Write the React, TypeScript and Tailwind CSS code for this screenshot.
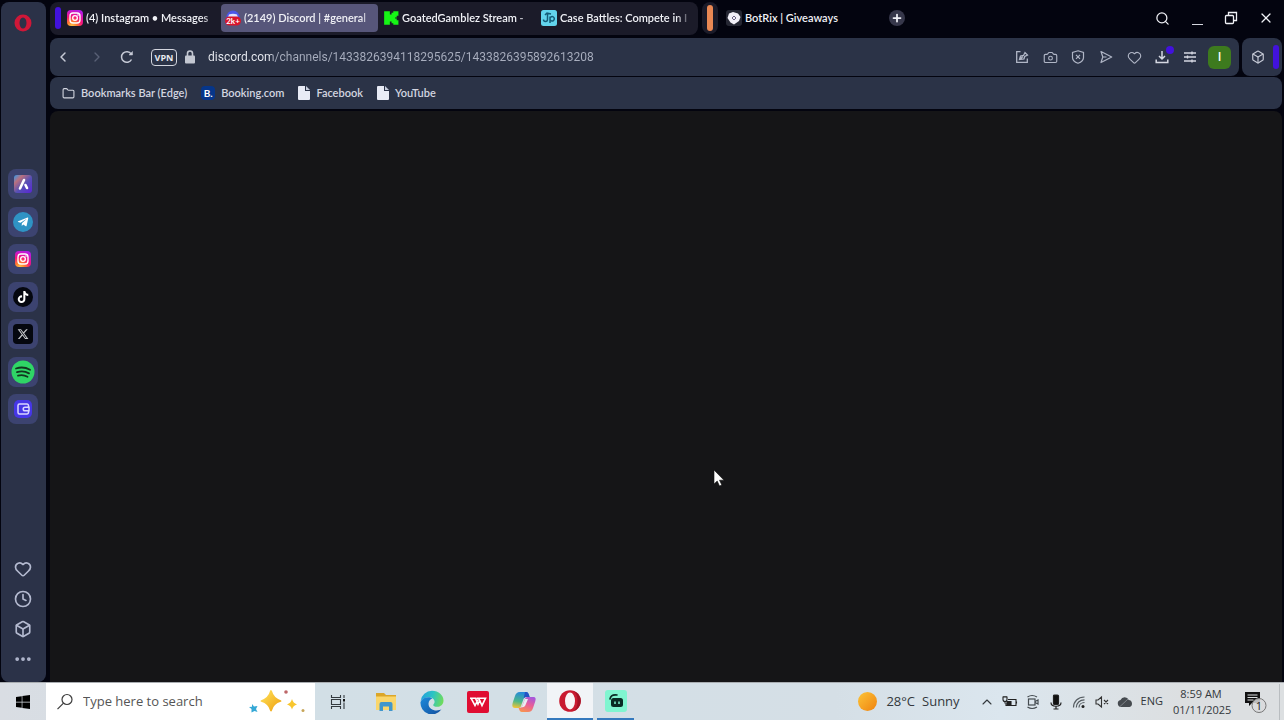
import type { ReactNode } from 'react';
import {
  Box,
  Camera,
  ChevronLeft,
  ChevronRight,
  ChevronUp,
  Clock,
  Ellipsis,
  Folder,
  Heart,
  Plus,
  Search,
  X,
} from 'lucide-react';
import { FaTelegramPlane, FaTiktok, FaWindows } from 'react-icons/fa';
import { FaXTwitter } from 'react-icons/fa6';

const InstagramIcon = ({ id, className }: { id: string; className?: string }) => (
  <svg viewBox="0 0 24 24" className={className}>
    <defs>
      <radialGradient id={id} cx="0.3" cy="1.05" r="1.1">
        <stop offset="0" stopColor="#ffd24a" />
        <stop offset="0.3" stopColor="#ff7a2f" />
        <stop offset="0.6" stopColor="#f5137c" />
        <stop offset="1" stopColor="#b51be8" />
      </radialGradient>
    </defs>
    <rect width="24" height="24" rx="6" fill={`url(#${id})`} />
    <rect x="4.5" y="4.5" width="15" height="15" rx="4.5" fill="none" stroke="#fff" strokeWidth="2" />
    <circle cx="12" cy="12" r="3.5" fill="none" stroke="#fff" strokeWidth="2" />
    <circle cx="16.5" cy="7.5" r="1.2" fill="#fff" />
  </svg>
);

const DiscordIcon = () => (
  <svg viewBox="0 0 16 16" className="h-4 w-4 shrink-0 overflow-visible">
    <circle cx="8" cy="7" r="6.5" fill="#4b56e8" />
    <path d="M4 4.5c2.5-1 5.5-1 8 0l1 3H3z" fill="#dfe2ff" />
    <rect x="0" y="6.5" width="16" height="9" rx="4.5" fill="#d8152c" />
    <text x="8" y="14" textAnchor="middle" fontSize="8" fontWeight="700" fill="#fff">2k+</text>
  </svg>
);

const KickIcon = () => (
  <svg viewBox="0 0 14 14" className="h-4 w-4 shrink-0">
    <path d="M1 1h5v3h1.500V2.500H9V1h4.500v4H12v1.500h-1.500v1H12V9h1.500v4H9v-1.500H7.500V10H6v3H1z" fill="#16f516" />
  </svg>
);

const CaseIcon = () => (
  <svg viewBox="0 0 16 16" className="h-4 w-4 shrink-0">
    <rect width="16" height="16" rx="2.500" fill="#62d4ec" />
    <path d="M6.500 3.500v6a2 2 0 0 1-4 0M9 13V6.500M9 8.200a2.200 2.200 0 1 1 0 1.200M4 5l2-2 4 1" fill="none" stroke="#135d78" strokeWidth="1.500" />
  </svg>
);

const BotrixIcon = () => (
  <svg viewBox="0 0 16 16" className="h-4 w-4 shrink-0">
    <rect width="16" height="16" rx="3" fill="#252733" />
    <path d="M3 3.500 7 2l5 1.500L14.500 7 13 11l-5 3.500-3.500-2L1.500 8z" fill="#f2f0f8" />
    <path d="m6 8 2-2 2 2-2 2z" fill="none" stroke="#6b6484" strokeWidth="1" />
  </svg>
);

const FileIcon = () => (
  <svg viewBox="0 0 12 14" className="h-[14px] w-3 shrink-0">
    <path d="M1 0h6v5h5v8a1 1 0 0 1-1 1H1a1 1 0 0 1-1-1V1a1 1 0 0 1 1-1z" fill="#e8ebf5" />
    <path d="M8 0v4h4z" fill="#c8cede" />
  </svg>
);

const LockIcon = () => (
  <svg viewBox="0 0 12 14" className="h-[14px] w-3 shrink-0">
    <rect x="1" y="5.500" width="10" height="8" rx="1" fill="#c3c7d1" />
    <path d="M3.500 6V3.500a2.500 2.500 0 0 1 5 0V6" fill="none" stroke="#c3c7d1" strokeWidth="1.600" />
  </svg>
);

const ReloadIcon = () => (
  <svg viewBox="0 0 14 14" className="h-[14px] w-[14px]" fill="none" stroke="currentColor" strokeWidth="1.500">
    <path d="M11.500 9.500A5.300 5.300 0 1 1 11.200 4" />
    <path d="M12.500 1.500v3.500H9z" fill="currentColor" strokeWidth="0.500" />
  </svg>
);

const EditIcon = () => (
  <svg viewBox="0 0 14 14" className="h-[14px] w-[14px]" fill="none" stroke="currentColor" strokeWidth="1.300">
    <path d="M5.500 1.700H1.700v10.600h10.600V8.500" />
    <path d="M4.500 9.500 5.500 6l3-.5 1.500-3 2.500 2.500-2.800 1.500-.7 2.500zM4.500 9.500 8 6.500" />
  </svg>
);

const ShieldIcon = () => (
  <svg viewBox="0 0 14 14" className="h-[14px] w-[14px]" fill="none" stroke="currentColor" strokeWidth="1.200">
    <path d="M7 .8 12.500 2.500v5c0 2.500-2 4.500-5.500 5.800C3.500 12 1.500 10 1.500 7.500v-5z" />
    <path d="m5 4.800 4 4m0-4-4 4" />
  </svg>
);

const SendIcon = () => (
  <svg viewBox="0 0 14 14" className="h-[14px] w-[14px]" fill="none" stroke="currentColor" strokeWidth="1.200" strokeLinejoin="round">
    <path d="M2 1.500 12.700 7 2 12.500 3.800 7zM3.800 7H7.500" />
  </svg>
);

const DownloadIcon = () => (
  <svg viewBox="0 0 14 14" className="h-[14px] w-[14px]" fill="none" stroke="currentColor" strokeWidth="1.500">
    <path d="M7 1v8M4 6l3 3 3-3M1.200 9.500v3h11.600v-3" />
  </svg>
);

const SetupIcon = () => (
  <svg viewBox="0 0 14 14" className="h-[14px] w-[14px]" fill="none" stroke="currentColor" strokeWidth="1.400">
    <path d="M1 3h12M1 7h12M1 11h12M9 1.500v3M4.500 5.500v3M9 9.500v3" />
  </svg>
);

const RestoreIcon = () => (
  <svg viewBox="0 0 14 14" className="h-[14px] w-[14px]" fill="none" stroke="currentColor" strokeWidth="1.300">
    <rect x="1.500" y="4.500" width="8" height="8" rx="1" />
    <path d="M4.500 4.500v-3h8v8h-3" />
  </svg>
);

const AriaIcon = () => (
  <svg viewBox="0 0 20 20" className="h-5 w-5">
    <defs>
      <linearGradient id="aria" x1="0" y1="0" x2="1" y2="1">
        <stop offset="0" stopColor="#2f9df0" />
        <stop offset="0.25" stopColor="#b9707e" />
        <stop offset="0.55" stopColor="#5750b5" />
        <stop offset="1" stopColor="#5a24d6" />
      </linearGradient>
    </defs>
    <rect x="1" y="1" width="18" height="18" rx="3" fill="url(#aria)" />
    <path d="M11 6 7 14.500M12.500 11l1.500 3" stroke="#fff" strokeWidth="2.600" strokeLinecap="round" />
  </svg>
);

const SpotifyIcon = () => (
  <svg viewBox="0 0 24 24" className="h-6 w-6">
    <circle cx="12" cy="12" r="11.500" fill="#2fd566" />
    <path d="M5 8.500c4.500-1.500 10-1 14 1.200M6 12.200c4-1.200 8.500-.8 12 1.200M7 15.700c3.500-1 6.500-.6 9.500 1.100" fill="none" stroke="#12351f" strokeWidth="1.800" strokeLinecap="round" />
  </svg>
);

const WalletIcon = () => (
  <svg viewBox="0 0 20 20" className="h-5 w-5">
    <rect x="1" y="1" width="18" height="18" rx="5" fill="#4636e6" />
    <path d="M15.500 8V6.500a1.500 1.500 0 0 0-1.500-1.500H6.500A1.500 1.500 0 0 0 5 6.500v7A1.500 1.500 0 0 0 6.500 15H14a1.500 1.500 0 0 0 1.500-1.500V12M16 8.200h-4a1.800 1.800 0 0 0 0 3.600h4z" fill="none" stroke="#d9d6ff" strokeWidth="1.500" />
  </svg>
);

const SearchGlass = () => (
  <svg viewBox="0 0 18 18" className="h-[18px] w-[18px] shrink-0" fill="none" stroke="#3d3d3d" strokeWidth="1.200">
    <circle cx="11" cy="6.500" r="5" />
    <path d="m7.500 10.200-6 6" />
  </svg>
);

const SparklesIcon = () => (
  <svg viewBox="0 0 58 26" className="h-[26px] w-[58px] shrink-0">
    <defs>
      <linearGradient id="spark" x1="0" y1="0" x2="1" y2="1">
        <stop offset="0" stopColor="#ffe25a" />
        <stop offset="1" stopColor="#eea010" />
      </linearGradient>
    </defs>
    <path d="M22 2q2 7.500 9.500 10-7.500 2-9.500 9.500-2-7.500-9.500-9.500 7.500-2.500 9.500-10z" fill="url(#spark)" stroke="url(#spark)" strokeWidth="1.800" strokeLinejoin="round" />
    <path d="M43 10q1 4 5 5.500-4 1-5 5-1-4-5-5 4-1.500 5-5.500z" fill="#f8c62e" />
    <path d="m3 15 2 2.500 3.500-.5-1.500 3 1.500 3-3-1-3 1.500V20L0 18l3-.300z" fill="#35a8d6" />
    <circle cx="37" cy="3" r="1.800" fill="#bd6668" />
    <circle cx="54" cy="21.500" r="1.500" fill="#c7a659" />
  </svg>
);

const TaskViewIcon = () => (
  <svg viewBox="0 0 16 16" className="h-4 w-4" fill="none" stroke="#333a3f" strokeWidth="1.100">
    <path d="M1.500 1v2.500h9V1M1.500 15v-2.500h9V15M1.500 5.500h9v5h-9zM14 1v3M14 8.500V15" />
    <rect x="13" y="5" width="2" height="2.500" fill="#111" stroke="none" />
  </svg>
);

const ExplorerIcon = () => (
  <svg viewBox="0 0 22 20" className="h-5 w-[22px]">
    <path d="M1 1h8l2 2h10v15H1z" fill="#dba629" />
    <path d="M1 4.500h20V18H1z" fill="#fad66b" />
    <path d="M4.500 19v-7a2 2 0 0 1 2-2h9a2 2 0 0 1 2 2v7h-3.500v-4.500H8V19z" fill="#4197cc" />
  </svg>
);

const EdgeIcon = () => (
  <svg viewBox="0 0 24 24" className="h-6 w-6">
    <defs>
      <linearGradient id="edge-top" x1="0" y1="0.3" x2="1" y2="0.5">
        <stop offset="0" stopColor="#239fdd" />
        <stop offset="0.5" stopColor="#2cc3c4" />
        <stop offset="1" stopColor="#6fdc5c" />
      </linearGradient>
      <linearGradient id="edge-low" x1="0" y1="0" x2="1" y2="1">
        <stop offset="0" stopColor="#1c8bdc" />
        <stop offset="1" stopColor="#134f9e" />
      </linearGradient>
    </defs>
    <path d="M.6 11A11.500 11.500 0 0 1 12 .8c6.800 0 11.500 4.600 11.500 9.700 0 4-3 6.300-6.300 6.300-2.500 0-4-.9-4-1.800s1.400-1.300 1.400-3.300c0-2.500-2.500-4.500-5.600-4.500C5 7.200 2 9 .6 11z" fill="url(#edge-top)" />
    <path d="M.5 12C1.500 9 4.500 7.200 8.500 7.200c1.600 0 3 .5 4 1.200-2 .3-4 2.400-4 5.300 0 4.300 4 6.800 8 6.800 2 0 4-.6 5-1.200A11.500 11.500 0 0 1 .5 12z" fill="url(#edge-low)" />
  </svg>
);

const WpsIcon = () => (
  <svg viewBox="0 0 22 22" className="h-[22px] w-[22px]">
    <rect width="22" height="22" rx="2" fill="#e00d32" />
    <path d="M3 7.200h5.500l2.500 6 2-4.500M9.500 7.200h9L15 14.500l-3.200-7M4 7.200l4 7.300 3-6" fill="none" stroke="#fff" strokeWidth="1.600" />
  </svg>
);

const CopilotIcon = () => (
  <svg viewBox="0 0 24 22" className="h-[22px] w-6">
    <defs>
      <linearGradient id="cop-a" x1="0.5" y1="0" x2="0.3" y2="1">
        <stop offset="0" stopColor="#2387dd" />
        <stop offset="0.6" stopColor="#4db888" />
        <stop offset="1" stopColor="#f0c336" />
      </linearGradient>
      <linearGradient id="cop-b" x1="0.7" y1="0" x2="0.3" y2="1">
        <stop offset="0" stopColor="#a757db" />
        <stop offset="0.5" stopColor="#ea5f95" />
        <stop offset="1" stopColor="#f79352" />
      </linearGradient>
    </defs>
    <path d="M8 1h6c2 0 2.500 1.500 3 3l.6 2h-3c-2 0-2.800 1-3.300 2.500L9 15c-.5 1.500-1.500 2-3 2H3C0 17 0 14 .8 11.500l2-6C3.800 2.500 5 1 8 1z" fill="url(#cop-a)" />
    <path d="M16 21h-6c-2 0-2.500-1.500-3-3l-.4-1.200C9 17 10 16 10.500 14.500L13 8c.5-1.500 1.500-2 3-2h5c3 0 3 2 2.200 4.500l-2 6C20.200 19.500 19 21 16 21z" fill="url(#cop-b)" />
    <path d="M13 1h1c2 0 2.500 1.500 3 3l.6 2h-3c-1.500 0-2.400.6-3 1.700z" fill="#2552c4" />
    <path d="M13 8 10.500 14.500c-.4 1-.8 1.600-1.500 2l2.500-.5c1-.3 1.500-1 2-2L16 8z" fill="#e9edf2" />
  </svg>
);

const OperaIcon = () => (
  <svg viewBox="0 0 24 24" className="h-6 w-6">
    <circle cx="12" cy="12" r="10.800" fill="#c91a30" />
    <path d="M15 1.700a10.700 10.700 0 0 1 0 20.600c3-1.500 4.500-5 4.500-10.300S18 3.200 15 1.700z" fill="#a31225" />
    <ellipse cx="12" cy="12" rx="5" ry="8.500" fill="#f8f4f6" />
  </svg>
);

const StreamIcon = () => (
  <svg viewBox="0 0 22 22" className="h-[22px] w-[22px]">
    <rect width="22" height="22" rx="3" fill="#80f5d0" />
    <path d="M5 9c.5-3 3-4.500 7-4" fill="none" stroke="#0a2b24" strokeWidth="1.600" strokeLinecap="round" />
    <rect x="6" y="8" width="12" height="9" rx="2.500" fill="#0a2b24" />
    <path d="M10 11.500v2.500M14 11.500v2.500" stroke="#80f5d0" strokeWidth="1.500" />
  </svg>
);

const BatteryIcon = () => (
  <svg viewBox="0 0 16 14" className="h-[14px] w-4" fill="none" stroke="#222" strokeWidth="1.100">
    <path d="M6 4.500h8v6H4V8M14.500 6.500v2" />
    <path d="M5 9.500V6.500h4v3z" fill="#222" />
    <path d="M1 2v2.500a2 2 0 0 0 4 0V2zM3 6.500v2M2 1v1M4 1v1" />
  </svg>
);

const MeetIcon = () => (
  <svg viewBox="0 0 14 16" className="h-4 w-[14px]" fill="none" stroke="#444b50" strokeWidth="1.200">
    <rect x="2.500" y="5" width="6.500" height="6" />
    <path d="M9 7.500 12 6v4L9 8.500M1.500 3Q6 0 11 3M1.500 13q4.500 3 9.500 0" />
  </svg>
);

const MicIcon = () => (
  <svg viewBox="0 0 12 16" className="h-4 w-3" fill="none" stroke="#222" strokeWidth="1.200">
    <rect x="3.500" y="1" width="5" height="9.500" rx="1" fill="#111" />
    <path d="M1 8.500c0 5 10 5 10 0M6 12v3M3.500 15h5" />
  </svg>
);

const WifiIcon = () => (
  <svg viewBox="0 0 14 14" className="h-[14px] w-[14px]" fill="none" stroke="#555c61" strokeWidth="1.200">
    <path d="M1.500 12.500c0-6 4.500-10.500 11-10.500M4.300 12.500c0-4.500 3.500-7.700 8.200-7.700M7 12.500c0-3 2.500-5 5.500-5" />
    <circle cx="11" cy="11.500" r="1.500" fill="#222" stroke="none" />
  </svg>
);

const MuteIcon = () => (
  <svg viewBox="0 0 14 14" className="h-[14px] w-[14px]" fill="none" stroke="#333" strokeWidth="1.100">
    <path d="M1 5h2l3.500-3v10L3 9H1zM9 5l4 4M13 5 9 9" />
  </svg>
);

const CloudIcon = () => (
  <svg viewBox="0 0 16 12" className="h-3 w-4">
    <path d="M4 11a3.500 3.500 0 0 1-.5-6.900A4.500 4.500 0 0 1 11.800 4 3.600 3.600 0 0 1 12.500 11z" fill="#464b50" />
    <path d="M3 10.500 11 3" stroke="#7d8388" />
  </svg>
);

const NotificationIcon = () => (
  <svg viewBox="0 0 24 24" className="h-6 w-6">
    <path d="M2 2h15v11H9l-3 3v-3H2z" fill="#111" />
    <path d="M4.500 5h10M4.500 7.500h10M4.500 10h6" stroke="#dcdfe0" />
    <circle cx="16" cy="15.500" r="7" fill="#d9dbdc" fillOpacity="0.850" stroke="#777" />
    <text x="16" y="19.500" textAnchor="middle" fontSize="11" fill="#222">1</text>
  </svg>
);

type Tab = { title: string; icon: ReactNode; active?: boolean };

const tabs: Tab[] = [
  { title: '(4) Instagram • Messages', icon: <InstagramIcon id="ig-tab" className="h-4 w-4 shrink-0" /> },
  { title: '(2149) Discord | #general', icon: <DiscordIcon />, active: true },
  { title: 'GoatedGamblez Stream -', icon: <KickIcon /> },
  { title: 'Case Battles: Compete in I', icon: <CaseIcon /> },
];

const sidebarApps = [
  { label: 'Aria', icon: <AriaIcon /> },
  {
    label: 'Telegram',
    icon: (
      <span className="flex h-5 w-5 items-center justify-center rounded-full bg-[#2f93c4]">
        <FaTelegramPlane className="mr-px h-3 w-3 text-white" />
      </span>
    ),
  },
  { label: 'Instagram', icon: <InstagramIcon id="ig-side" className="h-4 w-4" /> },
  {
    label: 'TikTok',
    icon: (
      <span className="flex h-5 w-5 items-center justify-center rounded-full bg-[#05070f]">
        <FaTiktok className="h-3 w-3 text-white" />
      </span>
    ),
  },
  {
    label: 'X',
    icon: (
      <span className="flex h-5 w-5 items-center justify-center rounded bg-[#05070f]">
        <FaXTwitter className="h-3 w-3 text-[#c5c7cb]" />
      </span>
    ),
  },
  { label: 'Spotify', icon: <SpotifyIcon /> },
  { label: 'Wallet', icon: <WalletIcon /> },
];

const sidebarTools = [
  { label: 'Bookmarks', icon: <Heart size={18} strokeWidth={2.2} /> },
  { label: 'History', icon: <Clock size={18} strokeWidth={2.2} /> },
  { label: 'Extensions', icon: <Box size={18} strokeWidth={2.2} /> },
  { label: 'More', icon: <Ellipsis size={20} strokeWidth={2.5} /> },
];

const addressActions = [
  { label: 'Edit page', icon: <EditIcon /> },
  { label: 'Snapshot', icon: <Camera size={15} strokeWidth={1.8} /> },
  { label: 'Ad blocker', icon: <ShieldIcon /> },
  { label: 'Send to Flow', icon: <SendIcon /> },
  { label: 'Add to bookmarks', icon: <Heart size={15} strokeWidth={1.8} /> },
];

const bookmarks = [
  { label: 'Bookmarks Bar (Edge)', icon: <Folder size={13} strokeWidth={2} className="shrink-0" /> },
  {
    label: 'Booking.com',
    icon: (
      <span className="flex h-[14px] w-[14px] shrink-0 items-center justify-center rounded-sm bg-[#06368a] text-[10px] leading-none font-bold text-white">
        B.
      </span>
    ),
  },
  { label: 'Facebook', icon: <FileIcon /> },
  { label: 'YouTube', icon: <FileIcon /> },
];

const taskbarApps = [
  { label: 'File Explorer', icon: <ExplorerIcon /> },
  { label: 'Microsoft Edge', icon: <EdgeIcon /> },
  { label: 'WPS Office', icon: <WpsIcon /> },
  { label: 'Copilot', icon: <CopilotIcon /> },
];

const trayIcons = [
  { label: 'Battery', icon: <BatteryIcon /> },
  { label: 'Meet Now', icon: <MeetIcon /> },
  { label: 'Microphone', icon: <MicIcon /> },
  { label: 'Network', icon: <WifiIcon /> },
  { label: 'Volume', icon: <MuteIcon /> },
  { label: 'OneDrive', icon: <CloudIcon /> },
];

const Sidebar = () => (
  <nav className="mt-[2px] ml-px flex w-[45px] shrink-0 flex-col items-center rounded-lg bg-[#2b3248] pr-px">
    <button aria-label="Opera menu" className="mt-3 flex h-[18px] w-[18px] items-center justify-center">
      <svg viewBox="0 0 18 18" className="h-[18px] w-[18px]">
        <circle cx="9" cy="9" r="8.500" fill="#cf1738" />
        <ellipse cx="9" cy="9" rx="3.500" ry="5.500" fill="#2b3248" />
      </svg>
    </button>
    <div className="mt-[137px] flex h-[255px] flex-col justify-between">
      {sidebarApps.map(app => (
        <button
          key={app.label}
          aria-label={app.label}
          className="flex h-[30px] w-[30px] items-center justify-center rounded-lg bg-[#3c4370]"
        >
          {app.icon}
        </button>
      ))}
    </div>
    <div className="mt-auto mb-2 flex flex-col text-[#b4bad0]">
      {sidebarTools.map(tool => (
        <button key={tool.label} aria-label={tool.label} className="flex h-[30px] w-[30px] items-center justify-center">
          {tool.icon}
        </button>
      ))}
    </div>
  </nav>
);

const TabBar = () => (
  <div className="flex h-9 shrink-0 items-center font-['Lato','Open_Sans',sans-serif] text-[11px] font-semibold text-[#f0f1f6]">
    <div className="flex h-[33px] items-center gap-px rounded-lg bg-[#1b1b29] pr-1 pl-[5px]">
      <span className="mr-px h-[22px] w-[6px] rounded-sm bg-[#4212dc]" />
      {tabs.map(tab => (
        <button
          key={tab.title}
          className={`flex h-7 w-[157px] items-center gap-[3px] rounded-sm pr-[2px] pl-1 ${
            tab.active ? 'bg-[#57567a]' : ''
          }`}
        >
          {tab.icon}
          <span className="flex-1 text-left whitespace-nowrap [mask-image:linear-gradient(90deg,#000_88%,transparent)]">
            {tab.title}
          </span>
        </button>
      ))}
    </div>
    <span className="ml-1 flex h-8 w-4 items-center justify-center rounded-lg bg-[#1b1b29]">
      <span className="h-[26px] w-[6px] rounded-sm bg-[#ea8853]" />
    </span>
    <button className="flex h-7 w-[157px] items-center gap-[3px] pl-2">
      <BotrixIcon />
      BotRix | Giveaways
    </button>
    <button aria-label="New tab" className="ml-[14px] flex h-4 w-4 items-center justify-center rounded-full bg-[#36374a]">
      <Plus size={12} strokeWidth={3.5} />
    </button>
    <div className="ml-auto flex items-center gap-5 pr-[10px]">
      <button aria-label="Search tabs">
        <Search size={15} />
      </button>
      <button aria-label="Minimize" className="flex h-[14px] w-[14px] items-end justify-center">
        <span className="h-px w-[11px] bg-[#d5d7df]" />
      </button>
      <button aria-label="Restore">
        <RestoreIcon />
      </button>
      <button aria-label="Close">
        <X size={16} strokeWidth={1.8} />
      </button>
    </div>
  </div>
);

const AddressBar = () => (
  <div className="mt-[2px] flex h-[38px] shrink-0 gap-[3px] pr-[2px] text-[#c6cad6]">
    <div className="flex min-w-0 flex-1 items-center rounded-lg bg-[#2b3347] pr-2 pl-1">
      <button aria-label="Back" className="flex w-[18px] justify-center">
        <ChevronLeft size={16} strokeWidth={2.2} />
      </button>
      <button aria-label="Forward" disabled className="ml-4 flex w-[18px] justify-center text-[#596076]">
        <ChevronRight size={16} />
      </button>
      <button aria-label="Reload" className="ml-3 flex w-[18px] justify-center">
        <ReloadIcon />
      </button>
      <button className="ml-[15px] flex h-[17px] w-[26px] items-center justify-center rounded border border-[#d3d6df] text-[9px] leading-none font-bold text-[#e7e9ef]">
        VPN
      </button>
      <span className="ml-[7px] flex">
        <LockIcon />
      </span>
      <input
        aria-label="Address"
        defaultValue="discord.com/channels/1433826394118295625/1433826395892613208"
        className="ml-3 h-6 min-w-0 flex-1 bg-[linear-gradient(90deg,#eceef4_64px,#a9afbf_64px)] bg-clip-text font-['Roboto','Open_Sans',sans-serif] text-xs text-transparent caret-white outline-none"
      />
      <div className="flex items-center text-[#b0b6c6]">
        {addressActions.map(action => (
          <button key={action.label} aria-label={action.label} className="flex w-7 justify-center">
            {action.icon}
          </button>
        ))}
        <button aria-label="Downloads" className="relative flex w-7 justify-center text-[#d5d8e2]">
          <DownloadIcon />
          <span className="absolute -top-1 right-[2px] h-2 w-2 rounded-full bg-[#4212dc]" />
        </button>
        <button aria-label="Easy setup" className="flex w-7 justify-center text-[#d5d8e2]">
          <SetupIcon />
        </button>
      </div>
      <button className="ml-1 flex h-[23px] w-[23px] items-center justify-center rounded-md bg-[#3d7a1e] text-xs font-semibold text-white">
        I
      </button>
    </div>
    <div className="flex w-10 items-center justify-end gap-2 rounded-lg bg-[#2b3347] pr-[3px]">
      <button aria-label="Extensions">
        <Box size={14} strokeWidth={2} />
      </button>
      <span className="h-6 w-[6px] rounded-sm bg-[#4212dc]" />
    </div>
  </div>
);

const BookmarksBar = () => (
  <div className="mt-px mr-[2px] flex h-8 shrink-0 items-center gap-[14px] rounded-lg bg-[#2b3347] pl-3 font-['Lato','Open_Sans',sans-serif] text-[11px] font-semibold text-[#d3d6e0]">
    {bookmarks.map(bookmark => (
      <a key={bookmark.label} href="#" className="flex items-center gap-[6px] whitespace-nowrap">
        {bookmark.icon}
        {bookmark.label}
      </a>
    ))}
  </div>
);

const Taskbar = () => (
  <footer className="flex h-[38px] shrink-0 items-stretch border-t border-[#a9adb1] bg-[linear-gradient(90deg,#d9dde3_0%,#d2dfe6_25%,#d5dfe6_65%,#dbe6ee_78%,#dcdfe1_92%)] text-[#33383c]">
    <button aria-label="Start" className="flex w-[46px] shrink-0 items-center justify-center">
      <FaWindows className="h-4 w-4 text-black" />
    </button>
    <label className="flex w-[269px] shrink-0 items-center bg-white pr-2 pl-[10px]">
      <SearchGlass />
      <input
        type="text"
        aria-label="Search"
        placeholder="Type here to search"
        className="ml-[9px] min-w-0 flex-1 text-[13px] outline-none placeholder:text-[#555]"
      />
      <SparklesIcon />
    </label>
    <button aria-label="Task view" className="mr-[2px] flex w-[46px] shrink-0 items-center justify-center">
      <TaskViewIcon />
    </button>
    {taskbarApps.map(app => (
      <button key={app.label} aria-label={app.label} className="flex w-[46px] shrink-0 items-center justify-center">
        {app.icon}
      </button>
    ))}
    <button aria-label="Opera" className="flex w-[46px] shrink-0 items-center justify-center border-b-2 border-[#3579bd] bg-[#f1f4f7]">
      <OperaIcon />
    </button>
    <button aria-label="Streamer" className="ml-1 flex w-[37px] shrink-0 items-center justify-center border-b-2 border-[#3579bd]">
      <StreamIcon />
    </button>
    <div className="ml-auto flex items-center">
      <button className="flex items-center text-[13px]">
        <span className="mr-[9px] h-[19px] w-[19px] rounded-full bg-linear-to-br from-[#fcc436] to-[#ee820c]" />
        28°C
        <span className="ml-[7px]">Sunny</span>
      </button>
      <button aria-label="Show hidden icons" className="ml-4 flex w-[23px] justify-center">
        <ChevronUp size={16} strokeWidth={1.6} />
      </button>
      {trayIcons.map(item => (
        <button key={item.label} aria-label={item.label} className="flex w-[23px] justify-center">
          {item.icon}
        </button>
      ))}
      <button className="ml-1 text-[11px]">ENG</button>
      <button className="ml-[10px] w-[56px] text-center text-[11px] leading-4 whitespace-nowrap">
        <span className="block">8:59 AM</span>
        <span className="block">01/11/2025</span>
      </button>
      <button aria-label="Notifications" className="ml-[14px]">
        <NotificationIcon />
      </button>
      <span className="ml-3 h-9 w-[5px] border-l border-[#b9bdc0]" />
    </div>
  </footer>
);

const Cursor = () => (
  <svg viewBox="0 0 12 18" className="absolute top-[358px] left-[663px] h-[18px] w-3">
    <path d="M1 1v14l3.200-3 2.300 5 2.300-1-2.300-4.800H11z" fill="#fff" stroke="#111" strokeWidth="0.600" />
  </svg>
);

const App = () => {
  return (
    <div className="flex h-screen flex-col overflow-hidden bg-[#03040f] font-['Open_Sans','Noto_Sans',sans-serif]">
      <div className="flex min-h-0 flex-1">
        <Sidebar />
        <div className="ml-1 flex min-w-0 flex-1 flex-col">
          <TabBar />
          <AddressBar />
          <BookmarksBar />
          <main className="relative mt-[2px] mr-[2px] flex-1 rounded-t-lg bg-[#151517]">
            <Cursor />
          </main>
        </div>
      </div>
      <Taskbar />
    </div>
  );
};

export default App;
